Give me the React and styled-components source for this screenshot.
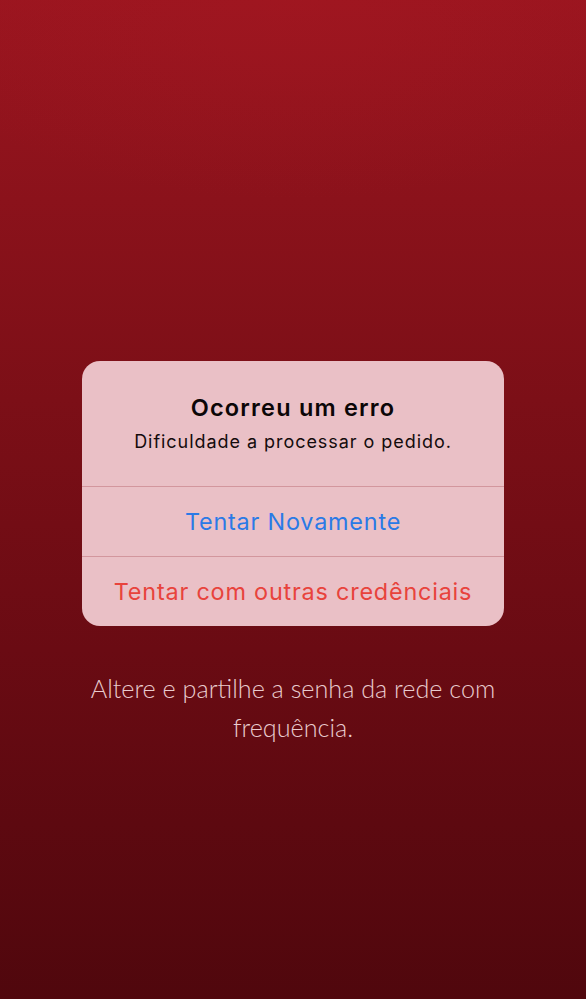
import React from "react";
import styled, { createGlobalStyle } from "styled-components";

const GlobalStyle = createGlobalStyle`
  html, body {
    margin: 0;
    padding: 0;
  }
  body {
    font-family: "Inter", "Roboto", sans-serif;
  }
`;

export default function App() {
  return (
    <>
      <GlobalStyle />
      <Screen>
        <Alert>
          <AlertBody>
            <Title>Ocorreu um erro</Title>
            <Message>Dificuldade a processar o pedido.</Message>
          </AlertBody>
          <Action>Tentar Novamente</Action>
          <Action destructive>Tentar com outras credênciais</Action>
        </Alert>
        <Hint>Altere e partilhe a senha da rede com frequência.</Hint>
      </Screen>
    </>
  );
}

const Screen = styled.div`
  width: 586px;
  height: 999px;
  box-sizing: border-box;
  padding-top: 361px;
  display: flex;
  flex-direction: column;
  align-items: center;
  background:
    radial-gradient(ellipse 70% 20% at 50% 0%, rgba(170, 24, 34, 0.35), transparent),
    linear-gradient(180deg, #9a151f 0%, #7c0f17 40%, #6a0b13 65%, #50070d 100%);
  overflow: hidden;
`;

const Alert = styled.div`
  width: 422px;
  border-radius: 18px;
  background: #eac0c6;
  display: flex;
  flex-direction: column;
  overflow: hidden;
`;

const AlertBody = styled.div`
  height: 126px;
  box-sizing: border-box;
  padding-top: 32px;
  display: flex;
  flex-direction: column;
  align-items: center;
  border-bottom: 1px solid #d3969d;
`;

const Title = styled.div`
  font-size: 23.5px;
  font-weight: 600;
  color: #0b0607;
  line-height: 30px;
  letter-spacing: 1.2px;
`;

const Message = styled.div`
  margin-top: 7px;
  font-size: 18px;
  color: #140b0c;
  line-height: 24px;
  letter-spacing: 0.95px;
`;

const Action = styled.div`
  height: 69px;
  display: flex;
  align-items: center;
  justify-content: center;
  font-size: 23.4px;
  letter-spacing: 0.8px;
  color: ${(p) => (p.destructive ? "#e8433c" : "#2a7ae6")};
  & + & {
    border-top: 1px solid #d3969d;
  }
`;

const Hint = styled.div`
  margin-top: 43px;
  width: 440px;
  text-align: center;
  font-family: "Lato", "Open Sans", sans-serif;
  font-weight: 300;
  font-size: 25.2px;
  line-height: 39px;
  color: #e9cbce;
`;
